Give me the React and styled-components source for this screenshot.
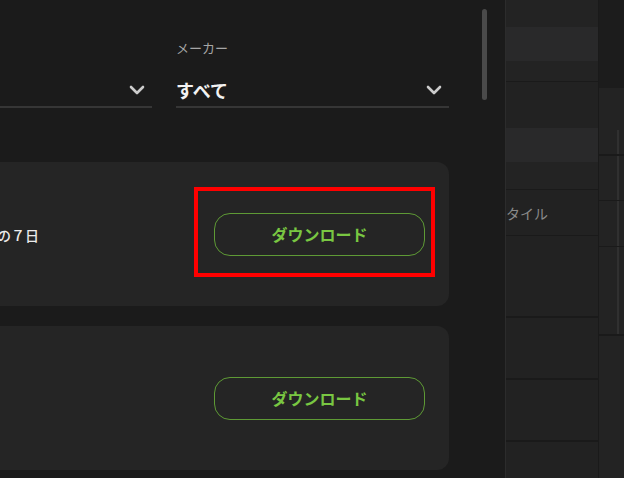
import React from 'react'
import styled, { createGlobalStyle } from 'styled-components'

const GlobalStyle = createGlobalStyle`
    * { box-sizing: border-box; }
    body {
        margin: 0;
        background: #1b1b1b;
        font-family: "Noto Sans CJK JP", "Noto Sans", sans-serif;
    }
`

const Page = styled.div`
    position: relative;
    width: 624px;
    height: 478px;
    overflow: hidden;
    display: flex;
    background: #222222;
`

const Under = styled.div`
    width: 480px;
    flex-shrink: 0;
`

const TableCol = styled.div`
    width: 119px;
    flex-shrink: 0;
    display: flex;
    flex-direction: column;
    border-right: 1px solid #1a1a1a;
`

const SideCol = styled.div`
    flex: 1;
    display: flex;
    flex-direction: column;
`

const Row = styled.div`
    height: ${(props) => props.h}px;
    flex-shrink: 0;
    background: ${(props) => props.tone || '#222222'};
    border-bottom: ${(props) => props.line ? `${props.line}px solid #1a1a1a` : 'none'};
    display: flex;
    align-items: center;
    padding-left: 12px;
    font-size: 14px;
    color: #8a8a8a;
`

const SideRow = styled(Row)`
    padding-left: 0;
    background: ${(props) => props.rail
        ? `linear-gradient(to right, transparent 18px, #303030 18px, #303030 20px, transparent 20px), ${props.tone || '#232323'}`
        : props.tone || '#232323'};
`

const Dialog = styled.div`
    position: absolute;
    top: 0;
    left: -145px;
    width: 651px;
    height: 478px;
    background: #1b1b1b;
    border-right: 1px solid #2c2c2c;
    overflow: hidden;
`

const Body = styled.div`
    padding: 38px 56px 0 24px;
`

const Fields = styled.div`
    display: grid;
    grid-template-columns: 273px 273px;
    gap: 24px;
`

const Field = styled.div`
    display: flex;
    flex-direction: column;
`

const Label = styled.div`
    font-size: 13px;
    line-height: 20px;
    color: #a6a6a6;
    margin-bottom: 14px;
`

const Select = styled.div`
    height: 36px;
    display: flex;
    align-items: center;
    justify-content: space-between;
    border-bottom: 2px solid #363636;
    padding-right: 7px;
    padding-top: 2px;
`

const Value = styled.span`
    font-size: 18px;
    font-weight: 700;
    color: #f2f2f2;
`

const Cards = styled.div`
    margin-top: 54px;
    display: flex;
    flex-direction: column;
    gap: 20px;
`

const Card = styled.div`
    height: 144px;
    border-radius: 12px;
    background: #252525;
    display: flex;
    align-items: center;
    justify-content: space-between;
    padding: 0 24px 0 20px;
`

const Info = styled.div`
    font-size: 14px;
    font-weight: 500;
    color: #ececec;
    margin-top: 2px;
`

const DownloadButton = styled.button`
    width: 211px;
    height: 43px;
    border: 1px solid #5e9a35;
    border-radius: 16px;
    background: transparent;
    color: #79c742;
    font-family: inherit;
    font-size: 16px;
    font-weight: 700;
    padding: 0;
    cursor: pointer;
`

const Scrollbar = styled.div`
    position: absolute;
    top: 9px;
    right: 18px;
    width: 5px;
    height: 91px;
    border-radius: 3px;
    background: #4a4a4a;
`

const Highlight = styled.div`
    position: absolute;
    left: 194px;
    top: 187px;
    width: 241px;
    height: 90px;
    border: 4px solid #ff0000;
    pointer-events: none;
`

const Chevron = () => (
    <svg width="16" height="10" viewBox="0 0 16 10">
        <path d="M2 2 L8 8 L14 2" fill="none" stroke="#cccccc" strokeWidth="2.6" strokeLinecap="round" strokeLinejoin="round" />
    </svg>
)

const tableRows = [
    { h: 27, tone: '#232323' },
    { h: 34, tone: '#29292a' },
    { h: 21, tone: '#232323', line: 1 },
    { h: 46 },
    { h: 34, tone: '#29292a' },
    { h: 28, tone: '#232323', line: 1 },
    { h: 46, line: 1, text: 'スタイル' },
    { h: 82, line: 2 },
    { h: 62, line: 2 },
    { h: 62, line: 2 },
    { h: 40 },
]

const sideRows = [
    { h: 88, tone: '#1c1c1c' },
    { h: 42 },
    { h: 26, line: 2, rail: true },
    { h: 45, line: 1, rail: true },
    { h: 46, line: 1, rail: true },
    { h: 89, line: 2, rail: true },
    { h: 142 },
]

const cards = [
    { info: '保存期間：直近の７日' },
    { info: '全期間' },
]

const App = () => {
    return (
        <>
            <GlobalStyle />
            <Page>
                <Under />
                <TableCol>
                    {tableRows.map((r, i) => (
                        <Row key={i} h={r.h} tone={r.tone} line={r.line}>{r.text}</Row>
                    ))}
                </TableCol>
                <SideCol>
                    {sideRows.map((r, i) => (
                        <SideRow key={i} h={r.h} tone={r.tone} line={r.line} rail={r.rail} />
                    ))}
                </SideCol>

                <Dialog>
                    <Body>
                        <Fields>
                            <Field>
                                <Label>期間</Label>
                                <Select>
                                    <Value>直近</Value>
                                    <Chevron />
                                </Select>
                            </Field>
                            <Field>
                                <Label>メーカー</Label>
                                <Select>
                                    <Value>すべて</Value>
                                    <Chevron />
                                </Select>
                            </Field>
                        </Fields>
                        <Cards>
                            {cards.map((c, i) => (
                                <Card key={i}>
                                    <Info>{c.info}</Info>
                                    <DownloadButton>ダウンロード</DownloadButton>
                                </Card>
                            ))}
                        </Cards>
                    </Body>
                    <Scrollbar />
                </Dialog>
                <Highlight />
            </Page>
        </>
    )
}

export default App
